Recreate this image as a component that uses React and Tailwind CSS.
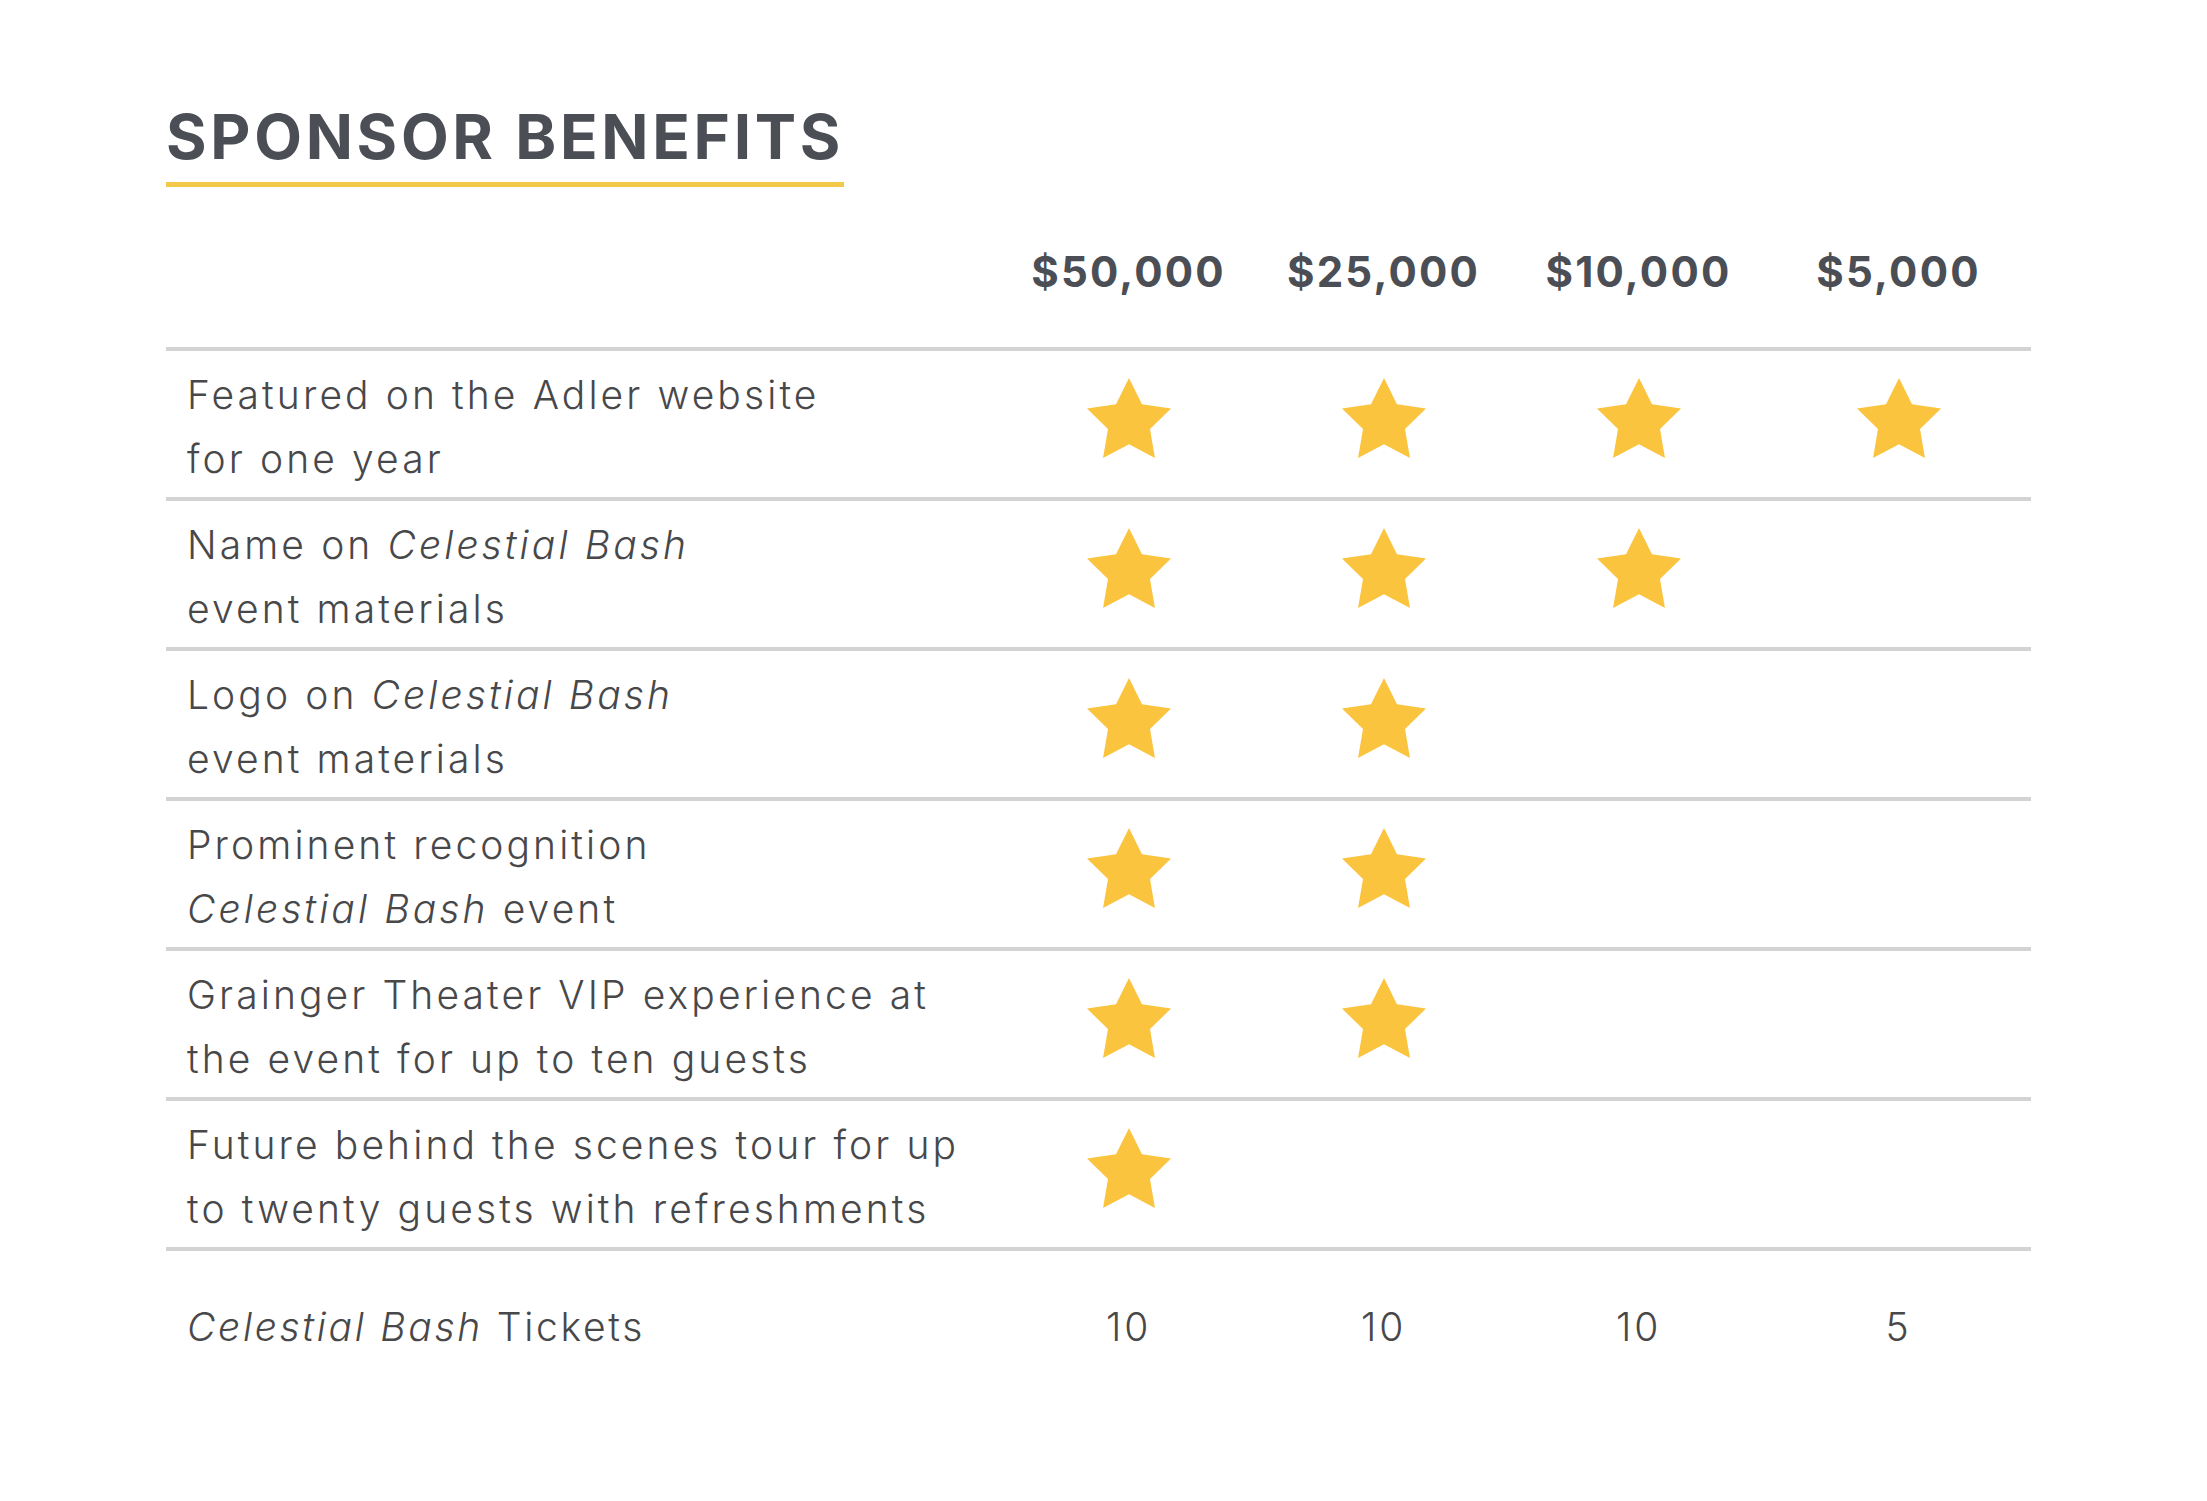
const tiers = ["$50,000", "$25,000", "$10,000", "$5,000"];

const rows = [
  { label: ["Featured on the Adler website", "for one year"], stars: 4 },
  {
    label: [
      <>
        Name on <i>Celestial Bash</i>
      </>,
      "event materials",
    ],
    stars: 3,
  },
  {
    label: [
      <>
        Logo on <i>Celestial Bash</i>
      </>,
      "event materials",
    ],
    stars: 2,
  },
  {
    label: [
      "Prominent recognition",
      <>
        <i>Celestial Bash</i> event
      </>,
    ],
    stars: 2,
  },
  { label: ["Grainger Theater VIP experience at", "the event for up to ten guests"], stars: 2 },
  { label: ["Future behind the scenes tour for up", "to twenty guests with refreshments"], stars: 1 },
];

function Star() {
  return (
    <svg viewBox="2 2 20 19.02" className="w-[84px] h-[80px] mb-[12px]">
      <polygon
        points="12,2 15.09,8.26 22,9.27 17,14.14 18.18,21.02 12,17.77 5.82,21.02 7,14.14 2,9.27 8.91,8.26"
        fill="#fbc43f"
      />
    </svg>
  );
}

const grid = "grid grid-cols-[835px_255px_255px_255px_265px] items-center";

export default function App() {
  return (
    <div className="w-[2207px] h-[1501px] bg-white text-[#4e4e50] font-['Inter',sans-serif]">
      <div className="pl-[166px] pt-[102px] w-[2031px]">
        {/* Title */}
        <div className="inline-block">
          <h1 className="text-[62px] leading-[70px] font-bold tracking-[3.7px] text-[#4b4e55]">SPONSOR BENEFITS</h1>
          <div className="h-[5px] bg-[#f3c94a] mt-[10px]" />
        </div>

        {/* Header */}
        <div className={`${grid} h-[160px] pt-[8px]`}>
          <div />
          {tiers.map((t) => (
            <div key={t} className="text-center text-[42px] font-bold text-[#4b4e55] tracking-[2.2px]">
              {t}
            </div>
          ))}
        </div>

        {/* Rows */}
        {rows.map((r, i) => (
          <div key={i} className={`${grid} h-[150px] border-t-[4px] border-[#d3d3d3]`}>
            <div className="pl-[21px] pt-[6px] text-[39px] leading-[64px] tracking-[3.1px] font-light text-[#48484a] whitespace-nowrap">
              <div>{r.label[0]}</div>
              <div>{r.label[1]}</div>
            </div>
            {[0, 1, 2, 3].map((c) => (
              <div key={c} className="flex justify-center">
                {c < r.stars ? <Star /> : null}
              </div>
            ))}
          </div>
        ))}

        {/* Tickets */}
        <div className={`${grid} h-[156px] border-t-[4px] border-[#d3d3d3] text-[39px] font-light text-[#48484a] tracking-[2.7px]`}>
          <div className="pl-[21px]">
            <i>Celestial Bash</i> Tickets
          </div>
          {["10", "10", "10", "5"].map((n, i) => (
            <div key={i} className="text-center">
              {n}
            </div>
          ))}
        </div>
      </div>
    </div>
  );
}
